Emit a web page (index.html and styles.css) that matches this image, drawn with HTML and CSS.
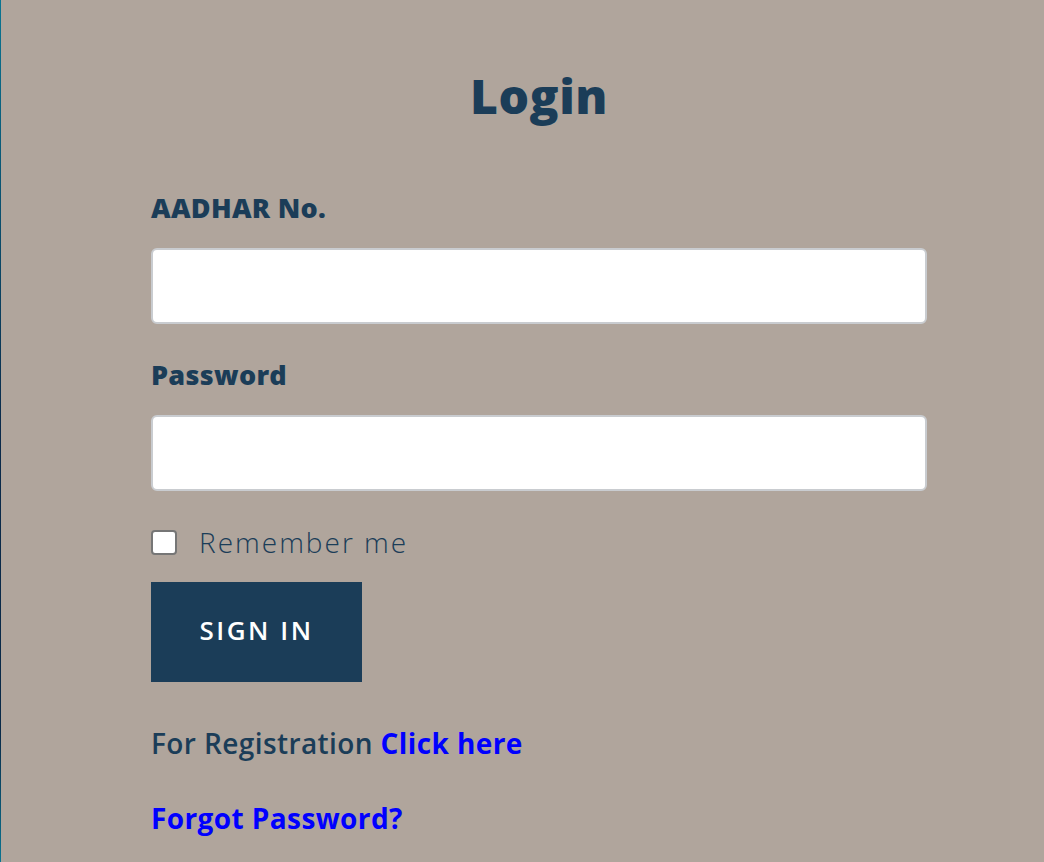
FILE: index.html
```html
<!DOCTYPE html>
<html>
<head>
  <title>Login</title>
  <link rel="stylesheet" href="styles.css">
</head>
<body>
  <div class="page">
    <div class="login">
      <h1>Login</h1>
      <form>
        <label for="aadhar">AADHAR No.</label>
        <input type="text" id="aadhar">
        <label for="password" class="second">Password</label>
        <input type="password" id="password">
        <div class="remember">
          <input type="checkbox" id="remember">
          <span>Remember me</span>
        </div>
        <button type="button">SIGN IN</button>
      </form>
      <p class="register">For Registration <a href="#">Click here</a></p>
      <p class="forgot"><a href="#">Forgot Password?</a></p>
    </div>
  </div>
</body>
</html>
```

FILE: styles.css
```css
html, body {
  margin: 0;
  padding: 0;
  height: 100%;
  font-family: "Open Sans", sans-serif;
  background: linear-gradient(#0a7592, #0b2a4a 50%, #0a2a48 85%, #0a7592);
  overflow: hidden;
}
.page {
  margin-left: 1px;
  min-height: 862px;
  background-color: #b0a59c;
}
.login {
  width: 776px;
  margin-left: 150px;
  padding-top: 66px;
}
h1 {
  margin: 0;
  font-size: 48px;
  line-height: 60px;
  font-weight: 800;
  letter-spacing: 0.5px;
  text-align: center;
  color: #1b3d58;
}
form {
  margin-top: 62px;
}
label {
  display: block;
  font-size: 27px;
  line-height: 40px;
  font-weight: 800;
  letter-spacing: 0.3px;
  color: #1b3d58;
  margin-bottom: 20px;
}
label.second {
  margin-top: 31px;
}
input[type="text"],
input[type="password"] {
  display: block;
  box-sizing: border-box;
  width: 776px;
  height: 76px;
  margin: 0;
  border: 2px solid #c9ccd0;
  border-radius: 6px;
  background-color: #fff;
  font-size: 24px;
  padding: 0 16px;
}
.remember {
  display: flex;
  align-items: center;
  height: 26px;
  margin-top: 38px;
}
.remember input {
  appearance: none;
  box-sizing: border-box;
  width: 26px;
  height: 25px;
  margin: 0 22px 0 0;
  border: 2px solid #767676;
  border-radius: 4px;
  background-color: #fff;
}
.remember span {
  font-size: 28px;
  line-height: 26px;
  font-weight: 300;
  letter-spacing: 2px;
  color: #1b3d58;
}
button {
  display: block;
  width: 211px;
  height: 100px;
  margin-top: 27px;
  border: none;
  background-color: #1b3d58;
  color: #fff;
  font-family: "Open Sans", sans-serif;
  font-size: 26px;
  font-weight: 600;
  letter-spacing: 2.5px;
  padding: 0 0 4px;
  cursor: pointer;
}
.register {
  margin: 41px 0 0;
  font-size: 28px;
  line-height: 40px;
  font-weight: 600;
  letter-spacing: 0.4px;
  color: #1b3d58;
}
.forgot {
  margin: 35px 0 0;
  font-size: 28px;
  line-height: 40px;
  letter-spacing: 0.4px;
}
a {
  color: #0000ff;
  font-weight: 700;
  text-decoration: none;
}
```
